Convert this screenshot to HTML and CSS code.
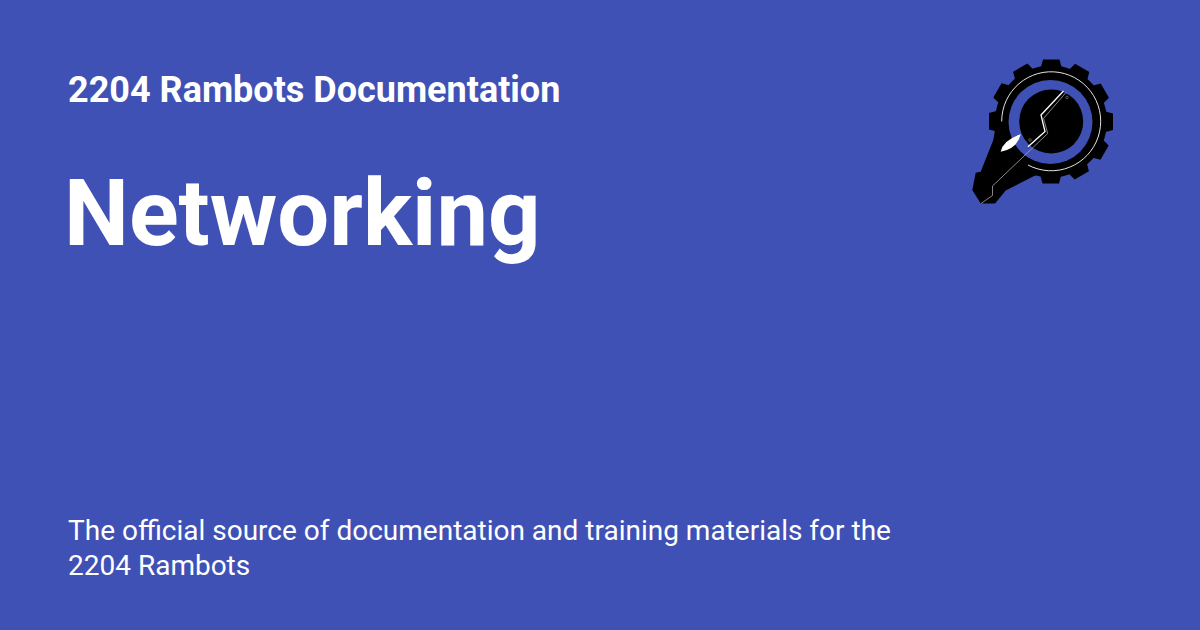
FILE: index.html
```html
<!DOCTYPE html>
<html lang="en">
<head>
<meta charset="utf-8">
<title>Networking - 2204 Rambots Documentation</title>
<link rel="stylesheet" href="styles.css">
</head>
<body>
<main class="card">
  <header class="top">
    <div class="heading">
      <h2 class="site">2204 Rambots Documentation</h2>
      <h1 class="page">Networking</h1>
    </div>
    <svg class="logo" viewBox="960 50 170 165" width="170" height="165" aria-label="2204 Rambots logo">
      <defs>
        <polygon id="tooth" points="1041,67 1043,59.500 1059.500,59.500 1061.500,67"/>
      </defs>
      <g fill="#000">
        <circle cx="1051" cy="121.5" r="56"/>
        <use href="#tooth"/>
        <use href="#tooth" transform="rotate(30 1051 121.5)"/>
        <use href="#tooth" transform="rotate(60 1051 121.5)"/>
        <use href="#tooth" transform="rotate(90 1051 121.5)"/>
        <use href="#tooth" transform="rotate(120 1051 121.5)"/>
        <use href="#tooth" transform="rotate(150 1051 121.5)"/>
        <use href="#tooth" transform="rotate(180 1051 121.5)"/>
        <use href="#tooth" transform="rotate(210 1051 121.5)"/>
        <use href="#tooth" transform="rotate(240 1051 121.5)"/>
        <use href="#tooth" transform="rotate(270 1051 121.5)"/>
        <use href="#tooth" transform="rotate(300 1051 121.5)"/>
        <use href="#tooth" transform="rotate(330 1051 121.5)"/>
        <polygon points="995,130 993.300,140 980.700,171.700 975.700,172.700 972.300,190 980.700,203.500 995,203.500 1005.700,190.500 1033,176.500 1045,172 1040,130"/>
      </g>
      <circle cx="1050.5" cy="122" r="42" fill="#4051b5"/>
      <circle cx="1051.2" cy="121.5" r="32" fill="#000"/>
      <path class="arc" d="M1001.7 121.5A49.5 49.5 0 1 1 1028 165"/>
      <path fill="#fff" d="M1000.700 151.700Q1003 140 1020.700 134.300Q1017 149 1000.700 151.700Z"/>
      <path class="wire-gray" d="M981 203.500L992.500 195.500V186L1047.700 133.500L1043.500 118.500L1066 92.500"/>
      <path class="wire-white" d="M1063.500 91L1041 115L1045 131.500L1028 146.700"/>
      <circle class="pad" cx="1067" cy="97.500" r="1.300"/>
      <circle class="pad" cx="1030" cy="140" r="1.300"/>
    </svg>
  </header>
  <p class="summary">The official source of documentation and training materials for the 2204 Rambots</p>
</main>
</body>
</html>
```
FILE: styles.css
```css
html, body {
  margin: 0;
  padding: 0;
}

.card {
  box-sizing: border-box;
  width: 1200px;
  height: 630px;
  padding: 65px 70px 47px 68px;
  display: flex;
  flex-direction: column;
  justify-content: space-between;
  background: #4051b5;
  color: #fff;
  font-family: Roboto, "Liberation Sans", sans-serif;
  overflow: hidden;
}

.top {
  display: flex;
  justify-content: space-between;
  align-items: flex-start;
}

.heading {
  display: flex;
  flex-direction: column;
  gap: 49px;
}

.site {
  margin: 0;
  font-size: 36px;
  line-height: 50px;
  font-weight: 700;
}

.page {
  margin: 0 0 0 -4px;
  font-size: 92px;
  line-height: 100px;
  font-weight: 700;
}

.logo {
  flex: none;
  display: block;
  margin-top: -15px;
}

.arc,
.wire-gray,
.wire-white,
.pad {
  fill: none;
}

.arc {
  stroke: #e4e4e4;
  stroke-width: 1;
}

.wire-gray {
  stroke: #a8a8a8;
  stroke-width: 0.8;
}

.wire-white {
  stroke: #fff;
  stroke-width: 1.3;
}

.pad {
  stroke: #777;
  stroke-width: 0.7;
}

.summary {
  margin: 0;
  width: 860px;
  font-size: 28px;
  line-height: 35px;
}
```
